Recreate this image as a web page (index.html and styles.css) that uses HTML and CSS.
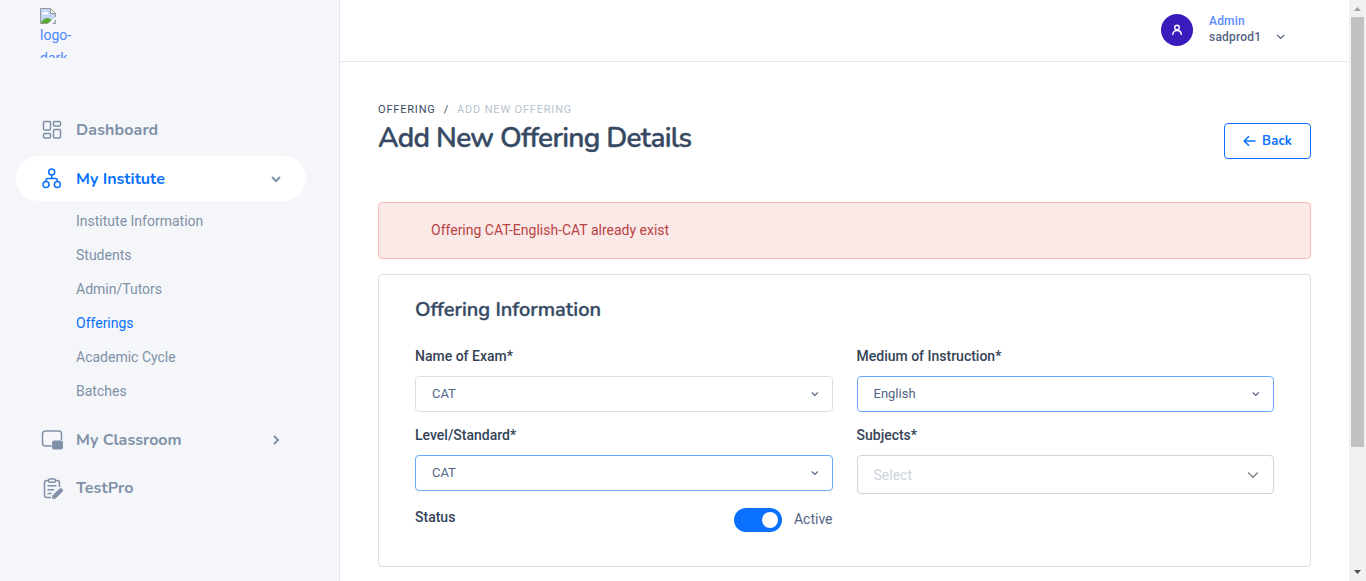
FILE: index.html
```html
<!DOCTYPE html>
<html lang="en">
<head>
<meta charset="utf-8">
<title>Add New Offering Details</title>
<link rel="stylesheet" href="styles.css">
</head>
<body>
<div class="app">
  <aside class="sidebar">
    <a class="logo">
      <svg class="logo-broken" width="16" height="16" viewBox="0 0 16 16">
        <path d="M.5.5h10l5 5v10H.5z" fill="#c3d5f5"/>
        <path d="M2 6.500c0-1.500 1-2 2-1.700C4.500 3 7 3 7.500 4.800c1 0 1.500.8 1.200 1.700z" fill="#fff"/>
        <path d="M1 15c1-3 4-5.500 7-5 2 .3 3 1.500 3.500 2.500L9 15z" fill="#57a935"/>
        <path d="M.5 15.500V.5h10l5 5v3.500M.5 15.500H8M13 15.500h2.500V12" fill="none" stroke="#989898"/>
        <path d="M10.500.5v5h5z" fill="#fff" stroke="#989898"/>
        <path d="M7.500 16 16 8.500v2.800L11.500 16z" fill="#f4f6fa"/>
      </svg>
      <span>logo-<br>dark</span>
    </a>
    <nav class="nav">
      <a class="nav-item">
        <svg class="nav-icon" viewBox="0 0 24 24"><rect x="3.500" y="3.500" width="7" height="8.500" rx="1.200"/><rect x="13.500" y="3.500" width="7" height="4.500" rx="1.200"/><rect x="3.500" y="15.500" width="7" height="4.500" rx="1.200"/><rect x="13.500" y="11.500" width="7" height="8.500" rx="1.200"/></svg>
        <span class="nav-label dashboard">Dashboard</span>
      </a>
      <a class="nav-item active">
        <svg class="nav-icon" viewBox="0 0 24 24"><circle cx="11.700" cy="5" r="3"/><circle cx="6" cy="17.500" r="3"/><circle cx="17.300" cy="17.500" r="3"/><path d="M11.700 8v3.500M6 14.500v-1q0-2 2-2h7.300q2 0 2 2v1"/></svg>
        <span class="nav-label institute">My Institute</span>
        <svg class="nav-arrow" viewBox="0 0 12 12"><path d="m2 4 4 4 4-4"/></svg>
      </a>
      <div class="subnav">
        <a>Institute Information</a>
        <a>Students</a>
        <a>Admin/Tutors</a>
        <a class="current">Offerings</a>
        <a>Academic Cycle</a>
        <a>Batches</a>
      </div>
      <a class="nav-item compact">
        <svg class="nav-icon" viewBox="0 0 24 24"><path d="M11.500 18H5.500q-3 0-3-3V6q0-3 3-3H19q2.500 0 2.500 3v6"/><rect class="solid" x="12" y="12.500" width="11" height="9" rx="2"/></svg>
        <span class="nav-label classroom">My Classroom</span>
        <svg class="nav-arrow" viewBox="0 0 12 12"><path d="m4 2 4 4-4 4"/></svg>
      </a>
      <a class="nav-item">
        <svg class="nav-icon" viewBox="0 0 24 24"><path d="M8.500 4.500H7q-2.500 0-2.500 2.500v12q0 2.500 2.500 2.500H11M15.500 4.500h1.500q2.500 0 2.500 2.500v4"/><rect x="8.500" y="3" width="7" height="3.300" rx="1.600"/><path d="M7.500 9.800h9M7.500 13.800h6.500M7.500 17.500h4"/><path class="solid" d="m12 23 .5-3.500 7-7q1-.7 2 0l1.200 1q.7 1 0 2l-7 7z"/></svg>
        <span class="nav-label testpro">TestPro</span>
      </a>
    </nav>
  </aside>

  <div class="page">
    <header class="topbar">
      <span class="avatar"><svg width="12" height="12" viewBox="0 0 12 12"><circle cx="6" cy="3.500" r="2.300"/><path d="M1.700 11c0-6 8.600-6 8.600 0"/></svg></span>
      <div class="user"><span class="role">Admin</span><span class="name">sadprod1</span></div>
      <svg class="user-arrow" width="10" height="8" viewBox="0 0 10 8"><path d="m1.200 2 3.500 3.500L8.200 2"/></svg>
    </header>

    <main class="content">
      <div class="heading">
        <div>
          <div class="crumbs"><span>OFFERING</span><span class="slash">/</span><span class="here">ADD NEW OFFERING</span></div>
          <h1>Add New Offering Details</h1>
        </div>
        <a class="back"><svg width="13" height="12" viewBox="0 0 13 12"><path d="M12.500 6H1M6 1.200 1.200 6 6 10.800"/></svg><span>Back</span></a>
      </div>

      <div class="alert">Offering CAT-English-CAT already exist</div>

      <section class="card">
        <h2>Offering Information</h2>
        <div class="form">
          <div class="field"><label>Name of Exam*</label>
            <div class="select"><span>CAT</span><svg width="10" height="8" viewBox="0 0 10 8"><path d="m1.800 2.500 3 3 3-3"/></svg></div></div>
          <div class="field"><label>Medium of Instruction*</label>
            <div class="select focus"><span>English</span><svg width="10" height="8" viewBox="0 0 10 8"><path d="m1.800 2.500 3 3 3-3"/></svg></div></div>
          <div class="field"><label>Level/Standard*</label>
            <div class="select focus"><span>CAT</span><svg width="10" height="8" viewBox="0 0 10 8"><path d="m1.800 2.500 3 3 3-3"/></svg></div></div>
          <div class="field"><label>Subjects*</label>
            <div class="select multi"><span>Select</span><svg width="12" height="8" viewBox="0 0 12 8"><path d="m1.200 1.500 4.800 4.800 4.800-4.800"/></svg></div></div>
          <div class="status"><label>Status</label><span class="toggle"></span><span class="state">Active</span></div>
        </div>
      </section>
    </main>
  </div>

  <div class="scrollbar">
    <svg width="17" height="17" viewBox="0 0 17 17"><path d="M5 11h7L8.500 7z" fill="#a3a3a3"/></svg>
    <div class="thumb"></div>
    <svg class="down" width="17" height="17" viewBox="0 0 17 17"><path d="M5 6h7l-3.500 4z" fill="#505050"/></svg>
  </div>
</div>
</body>
</html>
```
FILE: styles.css
```css
* { box-sizing: border-box; }
body { margin: 0; overflow: hidden; font-family: Roboto, "Liberation Sans", sans-serif; font-size: 14px; color: #526484; background: #fff; }
svg { display: block; flex: none; fill: none; }
h1, h2 { margin: 0; font-family: Nunito, Lato, sans-serif; font-weight: 600; color: #364a63; -webkit-text-stroke: 0.35px #364a63; }
.app { display: flex; height: 581px; }

.sidebar { flex: none; width: 340px; background: #f4f6fa; border-right: 1px solid #e2e7f1; }
.logo { display: block; width: 36px; height: 50px; margin: 8px 0 0 40px; overflow: hidden; color: #4d88ff; line-height: 23px; }
.logo span { display: block; }
.nav { margin: 49px 33px 0 16px; }
.nav-item { display: flex; align-items: center; height: 45px; margin-bottom: 4px; padding: 0 24px; border-radius: 23px; color: #8091a7; }
.nav-icon { width: 24px; height: 24px; margin-right: 12px; stroke: currentColor; stroke-width: 1.500; }
.nav-icon .solid { fill: currentColor; stroke: none; }
.nav-label { flex: 1; font: 700 16px/24px Nunito, Lato, sans-serif; }
.dashboard, .testpro { letter-spacing: 0.1px; }
.nav-arrow { width: 12px; height: 12px; stroke: #8091a7; stroke-width: 2; }
.active { background: #fff; color: #0971fe; margin-bottom: 3px; }
.compact { margin-bottom: 3px; }
.subnav { padding-left: 60px; margin-bottom: 9px; }
.subnav a { display: block; height: 34px; line-height: 34px; color: #8091a7; }
.subnav .current { color: #0971fe; }

.page { flex: 1; min-width: 0; }
.topbar { display: flex; align-items: center; justify-content: flex-end; height: 62px; padding: 0 63px 2px 0; border-bottom: 1px solid #e5e9f2; }
.avatar { display: flex; align-items: center; justify-content: center; width: 32px; height: 32px; border-radius: 50%; background: #3a1bbb; stroke: #fff; stroke-width: 1.400; }
.user { display: flex; flex-direction: column; width: 67px; margin: -2px 0 0 16px; font-weight: 500; font-size: 12px; line-height: 16px; letter-spacing: 0.2px; }
.role { color: #5a8cff; }
.user-arrow { stroke: #526484; stroke-width: 1.200; margin-top: 14px; }

.content { padding: 39px 38px 0; }
.heading { display: flex; justify-content: space-between; height: 101px; }
.crumbs { display: flex; height: 18px; font-size: 11px; line-height: 18px; letter-spacing: 0.82px; color: #364a63; }
.slash { margin: 0 8px; }
.here { color: #b7c2d0; }
h1 { font-size: 28px; line-height: 38px; letter-spacing: -0.71px; }
.back { display: flex; align-items: center; width: 87px; height: 36px; margin-top: 22px; padding-left: 18px; gap: 6px; border: 1px solid #0971fe; border-radius: 4px; color: #0971fe; font: 700 13px/20px Nunito, Lato, sans-serif; letter-spacing: 0.2px; }
.back svg { stroke: #0971fe; stroke-width: 1.500; }
.alert { height: 57px; padding-left: 52px; border: 1px solid #f9b9b7; border-radius: 4px; background: #fbe9e7; color: #b94343; line-height: 54px; }

.card { height: 293px; margin-top: 15px; padding: 22px 36px; border: 1px solid #dbdfea; border-radius: 4px; }
h2 { font-size: 20px; line-height: 25px; }
.form { display: grid; grid-template-columns: 1fr 1fr; gap: 13px 24px; margin-top: 24px; }
label { display: block; height: 20px; margin-bottom: 10px; line-height: 20px; font-weight: 500; color: #344357; }
.field { height: 66px; }
.select { display: flex; align-items: center; justify-content: space-between; height: 36px; padding: 0 12px 1px 16px; border: 1px solid #dbdfea; border-radius: 4px; font-size: 13px; color: #526484; }
.select svg { stroke: #526484; stroke-width: 1.100; margin-top: 1px; }
.focus { border-color: #6ba7fa; }
.multi { height: 39px; padding: 0 14px 0 16px; border-color: #cfd3dc; font-size: 14px; color: #cbd2de; }
.multi svg { stroke: #808080; stroke-width: 1.300; margin-top: 0; }
.status { display: flex; align-items: flex-start; margin-top: 4px; }
.status label { flex: 1; margin-top: -1px; }
.toggle { display: flex; justify-content: flex-end; width: 48px; height: 24px; padding: 4px; border-radius: 12px; background: #0971fe; }
.toggle::after { content: ""; width: 16px; height: 16px; border-radius: 50%; background: #fff; }
.state { margin-left: 12px; line-height: 23px; }

.scrollbar { flex: none; display: flex; flex-direction: column; width: 17px; background: #f1f1f1; }
.thumb { width: 13px; height: 430px; margin-left: 2px; background: #c1c1c1; }
.down { margin-top: auto; }
```
